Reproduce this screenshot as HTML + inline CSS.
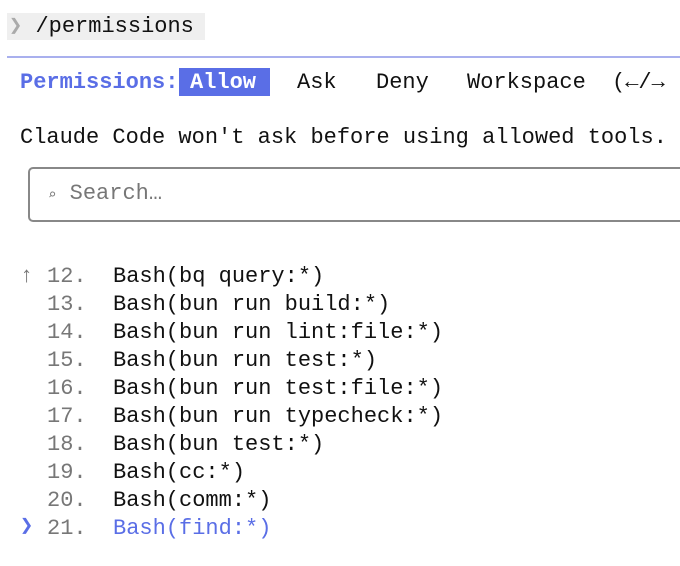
<!DOCTYPE html>
<html><head><meta charset="utf-8"><style>
body{margin:0;width:680px;height:566px;background:#fff;overflow:hidden;position:relative;font-family:"Liberation Mono","DejaVu Sans Mono",monospace;font-size:22px;color:#111}
.a{position:absolute;white-space:pre;line-height:28px}
.g{color:#777}
.b{color:#5a6ee6}
</style></head><body>
<div style="position:absolute;left:7px;top:13px;width:198px;height:27px;background:#efefef"></div>
<div class="a" style="left:9px;top:13px"><span style="color:#aaa">❯</span> /permissions</div>
<div style="position:absolute;left:7px;top:56px;width:673px;height:2px;background:#a9b0ee"></div>
<div class="a b" style="left:20px;top:69px;font-weight:bold">Permissions:</div>
<div style="position:absolute;left:179px;top:68px;width:91px;height:28px;background:#5a6ee6"></div>
<div class="a" style="left:190px;top:69px;color:#fff;font-weight:bold">Allow</div>
<div class="a" style="left:297px;top:69px">Ask</div>
<div class="a" style="left:376px;top:69px">Deny</div>
<div class="a" style="left:467px;top:69px">Workspace</div>
<div class="a" style="left:612px;top:69px">(←/→</div>
<div class="a" style="left:20px;top:124px">Claude Code won't ask before using allowed tools.</div>
<div style="position:absolute;left:28px;top:167px;width:670px;height:55px;border:2px solid #888;border-radius:5px;box-sizing:border-box"></div>
<div class="a g" style="left:48px;top:180px"><span style="font-size:14px">⌕</span> Search…</div>
<div class="a g" style="left:20px;top:263px">↑</div>
<div class="a b" style="left:20px;top:513px">❯</div>
<div class="a" style="left:47px;top:263px"><span class="g">12.</span>
<span class="g">13.</span>
<span class="g">14.</span>
<span class="g">15.</span>
<span class="g">16.</span>
<span class="g">17.</span>
<span class="g">18.</span>
<span class="g">19.</span>
<span class="g">20.</span>
<span class="g">21.</span></div>
<div class="a" style="left:113px;top:263px">Bash(bq query:*)
Bash(bun run build:*)
Bash(bun run lint:file:*)
Bash(bun run test:*)
Bash(bun run test:file:*)
Bash(bun run typecheck:*)
Bash(bun test:*)
Bash(cc:*)
Bash(comm:*)
<span class="b">Bash(find:*)</span></div>
</body></html>
